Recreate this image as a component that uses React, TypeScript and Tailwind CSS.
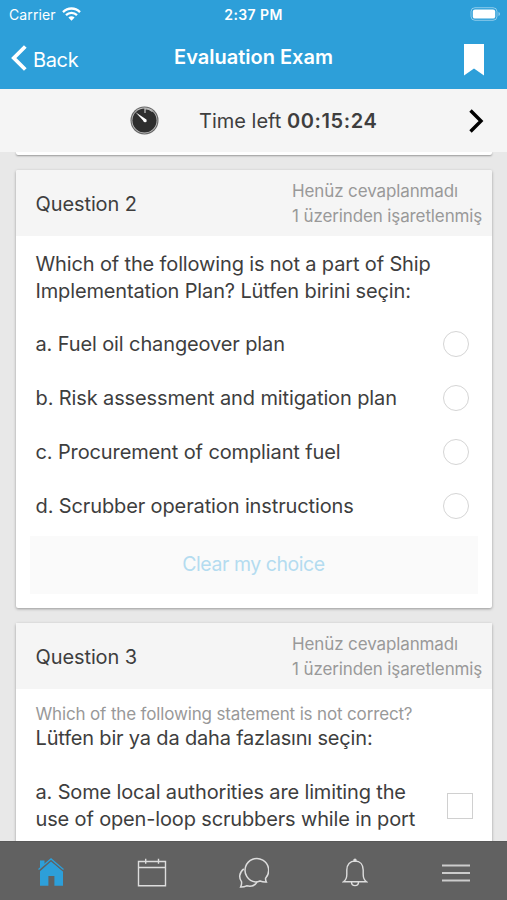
import React from 'react';

interface CardHeaderProps {
  title: string;
}

const CardHeader: React.FC<CardHeaderProps> = ({ title }) => {
  return (
    <div className="flex h-[66px] items-center justify-between bg-[#f5f5f5] pl-5 pr-[9px]">
      <h2 className="whitespace-nowrap pt-px text-[20px] tracking-[-0.1px]">{title}</h2>
      <div className="w-[190.5px] whitespace-nowrap pt-px text-[17px] leading-[24.5px] tracking-[-0.12px] text-[#999]">
        <p>Henüz cevaplanmadı</p>
        <p>1 üzerinden işaretlenmiş</p>
      </div>
    </div>
  );
};

const options = [
  'a. Fuel oil changeover plan',
  'b. Risk assessment and mitigation plan',
  'c. Procurement of compliant fuel',
  'd. Scrubber operation instructions',
];

const StatusBar = () => (
  <div className="grid h-7 grid-cols-3 items-center pl-[9px] pr-[6px] text-[14px]">
    <div className="flex items-center gap-[6px]">
      <span className="tracking-[0.1px]">Carrier</span>
      <svg width="19" height="14" viewBox="0 0 19 14" fill="none" stroke="white" strokeWidth="2.3">
        <path d="M1 5.1C5.8.3 13.2.3 18 5.1" />
        <path d="M4 8.2c3.1-3 7.9-3 11 0" />
        <path d="M6.4 10.5 9.5 13.8l3.1-3.3c-1.7-1.6-4.5-1.6-6.2 0Z" fill="white" stroke="none" />
      </svg>
    </div>
    <span className="pr-[3px] text-center font-semibold tracking-[0.4px]">2:37 PM</span>
    <svg className="-mt-px justify-self-end" width="31" height="14" viewBox="0 0 31 14">
      <rect x="1" y=".7" width="26" height="12.6" rx="4" fill="none" stroke="white" strokeOpacity=".45" />
      <rect x="2.8" y="2.4" width="22.4" height="9.2" rx="2.2" fill="white" />
      <path d="M28.5 5v4c2-.8 2-3.2 0-4Z" fill="white" fillOpacity=".5" />
    </svg>
  </div>
);

const NavBar = () => (
  <div className="grid h-[61px] grid-cols-[120px_1fr_120px] items-center pb-[2px]">
    <button className="flex items-center gap-[6px] pl-[11px] pt-px text-[20px] tracking-[-0.35px]">
      <svg width="16" height="26" viewBox="0 0 16 26" fill="none" stroke="white" strokeWidth="3.8">
        <path d="M14.3 1.5 2.8 13l11.5 11.5" />
      </svg>
      <span className="pt-[3px]">Back</span>
    </button>
    <h1 className="whitespace-nowrap pb-[2px] text-center text-[20px] font-semibold">Evaluation Exam</h1>
    <svg className="mr-[23px] mt-[5px] justify-self-end" width="20" height="32" viewBox="0 0 20 32">
      <path d="M0 0h20v31.5l-10-7-10 7Z" fill="white" />
    </svg>
  </div>
);

const TimerBar = () => (
  <div className="flex h-[63px] shrink-0 items-center bg-[#f5f5f5] pl-[130px] pr-[23px]">
    <svg width="29" height="29" viewBox="0 0 29 29">
      <circle cx="14.5" cy="14.5" r="14" fill="#666" />
      <circle cx="14.5" cy="14.5" r="12.9" fill="#c4c4c4" />
      <circle cx="14.5" cy="14.5" r="12.1" fill="#2e2e2e" />
      <path d="M15 7V2.600c3 0 5.500 1 7.500 2.800" fill="none" stroke="#bbb" strokeWidth="1.3" />
      <path d="m5.600 6.200 10.800 7.400-2.200 2.200Z" fill="white" />
      <circle cx="15.100" cy="14.700" r="1.600" fill="white" />
    </svg>
    <span className="ml-10 whitespace-nowrap text-[20px]">
      Time left <b className="font-semibold tracking-[0.6px]">00:15:24</b>
    </span>
    <svg className="ml-auto mt-[1px]" width="16" height="24" viewBox="0 0 16 24" fill="none" stroke="black" strokeWidth="3.4">
      <path d="m2.500 1.500 10.500 10.500L2.500 22.500" />
    </svg>
  </div>
);

const TabBar = () => (
  <nav className="grid h-[59px] shrink-0 grid-cols-5 place-items-center border-t border-[#585858] bg-[#616161] pt-[3px]">
    <svg width="28" height="30" viewBox="0 0 28 30" fill="#2d9fd9">
      <path d="M3 13.200 14 3.600l12 10v14.200h-8.600V18h-6v9.800H3Z" />
      <path d="m2 13 12-10.700 12 10.700" fill="none" stroke="#616161" strokeWidth=".8" />
      <path d="M1.500 11.400 14 .9l12.500 10.700" fill="none" stroke="#2d9fd9" strokeWidth="1.300" />
      <path d="M3 2.500h4.500v3.800L3 10Z" />
    </svg>
    <svg width="30" height="30" viewBox="0 0 30 30" fill="none" stroke="#ddd" strokeWidth="1.4">
      <path d="M1.500 3.500h27v24.300h-27Z M1.500 9.500h27 M8.700 .8v5 M21.500 .8v5" />
    </svg>
    <svg width="32" height="32" viewBox="0 0 32 32" fill="none" stroke="#ddd" strokeWidth="1.500">
      <path d="M29.400 25c-.7-1.300-1-2.500-.8-3.800A11.800 11.800 0 1 0 18.500 25c1.700 0 3.200-.4 4.500-1 2 .8 4.100 1.200 6.400 1Z" />
      <path d="M6.800 11.800c-4.900 3.800-5 9.300-2.300 12.800.3 1.800 0 3.600-.9 5.400 2.200.1 4.200-.3 6-1.200 4.400 1.100 8 .4 10.400-3.600" />
    </svg>
    <svg width="26" height="30" viewBox="0 0 26 30" fill="none" stroke="#ddd" strokeWidth="1.4">
      <path d="M1.500 23.800c2.600-1.800 3.300-3.700 3.300-7.200v-4.500C4.800 6.600 8 3 13 3s8.200 3.600 8.200 9.100v4.500c0 3.500.7 5.400 3.300 7.200Z" />
      <path d="M9.500 24c0 4.800 7 4.800 7 0" />
      <circle cx="13" cy="2.200" r="1" fill="#ddd" />
    </svg>
    <svg width="28" height="20" viewBox="0 0 28 20" stroke="#ccc" strokeWidth="1.8">
      <path d="M0 2.500h28M0 10h28M0 17.500h28" />
    </svg>
  </nav>
);

export default function App() {
  return (
    <div className="flex h-[900px] w-[507px] flex-col overflow-hidden bg-[#e8e8e8] font-['Inter',sans-serif] text-[#3e3e3e]">
      <header className="h-[89px] shrink-0 bg-[#2d9fd9] text-white">
        <StatusBar />
        <NavBar />
      </header>
      <TimerBar />

      <main className="min-h-0 flex-1 overflow-hidden px-[15.5px]">
        <div className="h-[3px] rounded-b-[2px] bg-white shadow-[0_1px_2px_rgba(0,0,0,0.35)]" />

        <section className="mt-[15px] h-[438px] overflow-hidden rounded-[2px] bg-white shadow-[0_1px_3px_rgba(0,0,0,0.35)]">
          <CardHeader title="Question 2" />
          <div className="whitespace-nowrap px-5 pt-[15px] text-[20px] leading-[27px] tracking-[-0.14px]">
            <p>Which of the following is not a part of Ship</p>
            <p>Implementation Plan? Lütfen birini seçin:</p>
          </div>
          <ul className="mt-[12.500px]">
            {options.map((option) => (
              <li key={option} className="flex h-[53.75px] items-center justify-between whitespace-nowrap pl-5 pr-[23px] text-[20px] tracking-[-0.12px]">
                {option}
                <span className="size-[26px] rounded-full border-[1.5px] border-[#d5d5d5]" />
              </li>
            ))}
          </ul>
          <button className="mx-auto mt-[3px] block h-[58px] w-[448px] bg-[#fafafa] text-[19.5px] tracking-[-0.45px] text-[#b4dcf0]">
            Clear my choice
          </button>
        </section>

        <section className="mt-[15px] h-[260px] rounded-[2px] bg-white shadow-[0_1px_3px_rgba(0,0,0,0.35)]">
          <CardHeader title="Question 3" />
          <div className="whitespace-nowrap px-5 pt-[13px] tracking-[-0.15px]">
            <p className="text-[17px] leading-[24px] text-[#999]">Which of the following statement is not correct?</p>
            <p className="text-[20px] leading-[25px] tracking-[-0.18px]">Lütfen bir ya da daha fazlasını seçin:</p>
          </div>
          <div className="mt-[28px] flex items-center justify-between whitespace-nowrap pl-5 pr-[19px] text-[20px] leading-[27px] tracking-[-0.15px]">
            <p>
              a. Some local authorities are limiting the
              <br />
              use of open-loop scrubbers while in port
            </p>
            <span className="size-[26px] border-[1.5px] border-[#d0d0d0]" />
          </div>
        </section>
      </main>
      <TabBar />
    </div>
  );
}
